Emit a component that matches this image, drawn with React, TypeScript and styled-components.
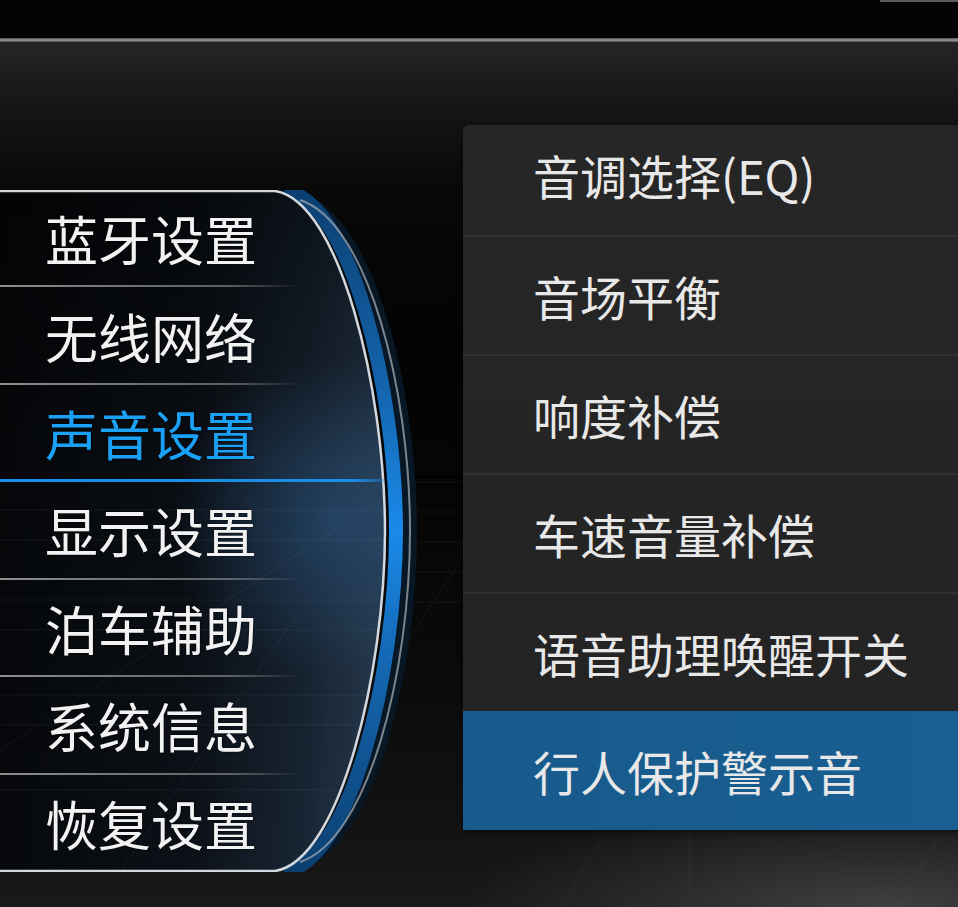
import React from 'react';
import styled, { createGlobalStyle } from 'styled-components';

const Global = createGlobalStyle`
  html, body { margin: 0; padding: 0; background: #000; }
  body { font-family: "Noto Sans CJK SC", "Noto Sans", sans-serif; }
  #root { width: 958px; height: 907px; }
`;

const Screen = styled.div`
  position: relative;
  width: 958px;
  height: 907px;
  overflow: hidden;
  display: flex;
  flex-direction: column;
  background: #000;
`;

const TopBar = styled.div`
  flex: none;
  height: 38px;
  background: #030303;
  display: flex;
  justify-content: flex-end;
  align-items: flex-start;
`;

const TopTick = styled.div`
  width: 78px;
  height: 2px;
  background: #5c5c5c;
`;

const Rule = styled.div`
  flex: none;
  height: 4px;
  background: linear-gradient(180deg, #4a4a4a, #9c9c9c 50%, #505050);
`;

const Stage = styled.div`
  position: relative;
  flex: 1;
  display: flex;
  align-items: flex-start;
  background:
    radial-gradient(ellipse 420px 110px at 92% 100%, rgba(110, 110, 110, 0.45), rgba(0, 0, 0, 0)),
    linear-gradient(180deg, #252525 0px, #161616 60px, #080808 150px, #030303 300px, #050505 440px, #0a0a0a 620px, #121212 780px, #191919 865px);
`;

const Backdrop = styled.svg`
  position: absolute;
  inset: 0;
  width: 958px;
  height: 865px;
  pointer-events: none;
`;

const LeftPanel = styled.div`
  position: relative;
  flex: none;
  width: 420px;
  height: 682px;
  margin-top: 148px;
`;

const LensArt = styled.svg`
  position: absolute;
  inset: 0;
  width: 420px;
  height: 682px;
`;

const MenuList = styled.div`
  position: relative;
  width: 384px;
  height: 100%;
  display: flex;
  flex-direction: column;
`;

const MenuRow = styled.div<{ $active?: boolean; $last?: boolean }>`
  flex: 1;
  display: flex;
  align-items: center;
  padding-left: 45px;
  font-size: 53px;
  line-height: 1;
  color: ${(p) => (p.$active ? '#1aa0f5' : '#f2f2f2')};
  text-shadow: 0 0 2px rgba(0, 0, 0, 0.9);
  background: ${(p) =>
    p.$last
      ? 'none'
      : p.$active
      ? 'linear-gradient(90deg, #1a8fe8, #1a8fe8 92%, rgba(26,143,232,0.3)) bottom / 100% 3px no-repeat'
      : 'linear-gradient(90deg, rgba(200,200,200,0.7), rgba(190,190,190,0.45) 60%, rgba(190,190,190,0) 78%) bottom / 100% 2px no-repeat'};
`;

const RightPanel = styled.div`
  position: relative;
  flex: none;
  width: 520px;
  margin-top: 83px;
  margin-left: 43px;
  background: linear-gradient(180deg, #262626, #232323);
  border-radius: 6px 0 0 0;
  overflow: hidden;
  display: flex;
  flex-direction: column;
  box-shadow: 0 2px 6px rgba(0, 0, 0, 0.5);
`;

const SubRow = styled.div<{ $first?: boolean; $active?: boolean }>`
  height: ${(p) => (p.$first ? '110px' : '119px')};
  box-sizing: border-box;
  padding-left: 70px;
  padding-bottom: ${(p) => (p.$first ? '12px' : '0')};
  display: flex;
  align-items: center;
  font-size: 47px;
  line-height: 1;
  color: #e8e8e8;
  border-top: ${(p) => (p.$first || p.$active ? 'none' : '2px solid #313131')};
  background: ${(p) => (p.$active ? 'linear-gradient(90deg, #175a8b, #1a5f92)' : 'transparent')};
`;

const mainItems = ['蓝牙设置', '无线网络', '声音设置', '显示设置', '泊车辅助', '系统信息', '恢复设置'];
const subItems = ['音调选择(EQ)', '音场平衡', '响度补偿', '车速音量补偿', '语音助理唤醒开关', '行人保护警示音'];

const inner = 'M0,1 H275 C340,11 385,200 385,341 C385,482 340,671 275,681 H0 Z';
const innerOpen = 'M0,1 H275 C340,11 385,200 385,341 C385,482 340,671 275,681 H0';
const band = 'M284,0 C351,10 396,200 396,341 C396,482 351,672 284,682';
const outer = 'M300,10 C368,32 410,200 410,341 C410,482 368,650 300,672';

export default function App() {
  return (
    <Screen>
      <Global />
      <TopBar>
        <TopTick />
      </TopBar>
      <Rule />
      <Stage>
        <Backdrop viewBox="0 0 958 865">
          <g stroke="#9aa4ae" strokeWidth="1" opacity="0.08">
            <line x1="410" y1="440" x2="463" y2="440" />
            <line x1="410" y1="470" x2="463" y2="470" />
            <line x1="410" y1="500" x2="463" y2="500" />
            <line x1="410" y1="530" x2="463" y2="530" />
            <line x1="410" y1="560" x2="463" y2="560" />
            <line x1="460" y1="520" x2="380" y2="640" />
            <line x1="600" y1="800" x2="560" y2="865" />
            <line x1="958" y1="760" x2="900" y2="865" />
            <line x1="690" y1="790" x2="690" y2="865" />
          </g>
          <line x1="400" y1="435" x2="463" y2="435" stroke="#000" strokeWidth="3" />
        </Backdrop>
        <LeftPanel>
          <LensArt viewBox="0 0 420 682">
            <defs>
              <linearGradient id="lensH" x1="0" y1="0" x2="1" y2="0">
                <stop offset="0" stopColor="#06080b" />
                <stop offset="0.5" stopColor="#0c1118" />
                <stop offset="0.8" stopColor="#1a2736" />
                <stop offset="1" stopColor="#2a3e54" />
              </linearGradient>
              <linearGradient id="lensV" x1="0" y1="0" x2="0" y2="1">
                <stop offset="0" stopColor="#000" stopOpacity="0.55" />
                <stop offset="0.4" stopColor="#000" stopOpacity="0.2" />
                <stop offset="1" stopColor="#000" stopOpacity="0" />
              </linearGradient>
              <radialGradient id="glow" cx="330" cy="330" r="160" gradientUnits="userSpaceOnUse">
                <stop offset="0" stopColor="#3a78b8" stopOpacity="0.35" />
                <stop offset="1" stopColor="#3a78b8" stopOpacity="0" />
              </radialGradient>
              <linearGradient id="bandG" x1="0" y1="0" x2="0" y2="682" gradientUnits="userSpaceOnUse">
                <stop offset="0" stopColor="#0b3f70" />
                <stop offset="0.3" stopColor="#1466b0" />
                <stop offset="0.5" stopColor="#1a8aea" />
                <stop offset="0.7" stopColor="#1466b0" />
                <stop offset="1" stopColor="#0b3f70" />
              </linearGradient>
              <clipPath id="lensClip">
                <path d={inner} />
              </clipPath>
            </defs>
            <path d={outer} fill="none" stroke="#071726" strokeWidth="14" />
            <path d={band} fill="none" stroke="url(#bandG)" strokeWidth="14" />
            <path d={outer} fill="none" stroke="#9aa0a8" strokeWidth="2" opacity="0.8" />
            <path d={inner} fill="url(#lensH)" />
            <path d={inner} fill="url(#lensV)" />
            <path d={inner} fill="url(#glow)" />
            <g clipPath="url(#lensClip)" stroke="#b0bccb" strokeWidth="1" opacity="0.07">
              <line x1="0" y1="320" x2="385" y2="320" />
              <line x1="0" y1="350" x2="385" y2="350" />
              <line x1="0" y1="410" x2="385" y2="410" />
              <line x1="0" y1="440" x2="385" y2="440" />
              <line x1="0" y1="505" x2="385" y2="505" />
              <line x1="0" y1="535" x2="385" y2="535" />
              <line x1="0" y1="600" x2="385" y2="600" />
              <line x1="380" y1="310" x2="0" y2="560" />
              <line x1="300" y1="420" x2="120" y2="682" />
            </g>
            <path d={innerOpen} fill="none" stroke="#d2d8de" strokeWidth="2.5" />
          </LensArt>
          <MenuList>
            {mainItems.map((t, i) => (
              <MenuRow key={t} $active={i === 2} $last={i === mainItems.length - 1}>
                {t}
              </MenuRow>
            ))}
          </MenuList>
        </LeftPanel>
        <RightPanel>
          {subItems.map((t, i) => (
            <SubRow key={t} $first={i === 0} $active={i === subItems.length - 1}>
              {t}
            </SubRow>
          ))}
        </RightPanel>
      </Stage>
    </Screen>
  );
}
